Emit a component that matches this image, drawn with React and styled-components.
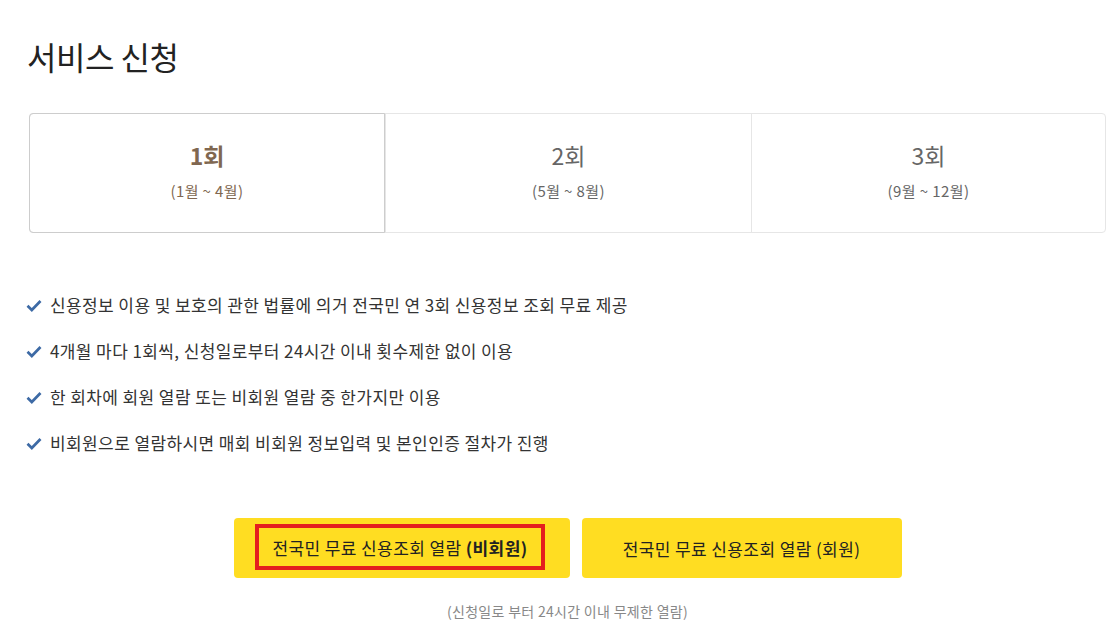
import React from "react";
import styled, { createGlobalStyle } from "styled-components";

const Global = createGlobalStyle`
  html, body { margin: 0; padding: 0; background: #fff; }
  body { font-family: "Noto Sans CJK KR", "Noto Sans", sans-serif; color: #333; }
`;

const Page = styled.div`
  width: 1077px;
  margin-left: 29px;
  padding-top: 34px;
`;

const Title = styled.h1`
  margin: 0 0 0 -2px;
  font-size: 32px;
  line-height: 44px;
  font-weight: 400;
  color: #222;
  letter-spacing: -0.5px;
`;

const Tabs = styled.div`
  margin-top: 35px;
  display: grid;
  grid-template-columns: 355px 366px 1fr;
  height: 120px;
  box-sizing: border-box;
  border: 1px solid #e6e6e6;
  border-radius: 4px;
`;

const Tab = styled.div`
  display: flex;
  flex-direction: column;
  align-items: center;
  justify-content: flex-start;
  gap: 11px;
  padding-top: 26px;
  margin: ${(p) => (p.$active ? "-1px 0 -1px -1px" : "0")};
  border: ${(p) => (p.$active ? "1px solid #cdcdcd" : "none")};
  border-left: ${(p) => (p.$active ? "1px solid #cdcdcd" : p.$first ? "none" : "1px solid #e6e6e6")};
  border-radius: ${(p) => (p.$active ? "4px 0 0 4px" : "0")};
  color: ${(p) => (p.$active ? "#806750" : "#666")};
`;

const TabTitle = styled.div`
  font-size: 23px;
  line-height: 30px;
  font-weight: ${(p) => (p.$active ? 700 : 400)};
`;

const TabSub = styled.div`
  font-size: 15px;
  line-height: 20px;
  letter-spacing: 0.4px;
`;

const List = styled.ul`
  list-style: none;
  margin: 60px 0 0;
  padding: 0;
  display: flex;
  flex-direction: column;
  gap: 22px;
`;

const Item = styled.li`
  display: flex;
  align-items: center;
  gap: 8px;
  margin-left: -3px;
  font-size: 17px;
  line-height: 24px;
  color: #333;
  letter-spacing: 0.4px;
`;

const Check = () => (
  <svg width="16" height="13" viewBox="0 0 16 13">
    <path d="M1.5 6.8 L5.8 11 L14.5 2" fill="none" stroke="#3d6aa5" strokeWidth="2.7" strokeLinejoin="miter" />
  </svg>
);

const Buttons = styled.div`
  margin-top: 63px;
  display: flex;
  justify-content: center;
  gap: 12px;
`;

const Button = styled.button`
  width: ${(p) => p.$w}px;
  height: 60px;
  border: none;
  border-radius: 4px;
  background: #ffdd22;
  display: flex;
  align-items: center;
  justify-content: center;
  font-family: inherit;
  font-size: 17px;
  color: #222;
  padding: 0;
  cursor: pointer;
  letter-spacing: 0.4px;
`;

const Marked = styled.span`
  box-sizing: border-box;
  width: 290px;
  height: 46px;
  margin-top: -2px;
  margin-left: -3px;
  border: 4px solid #e41e1e;
  display: flex;
  align-items: center;
  justify-content: center;
`;

const Note = styled.p`
  margin: 23px 0 0;
  text-align: center;
  font-size: 14px;
  line-height: 20px;
  color: #888;
  letter-spacing: 0.3px;
`;

const tabs = [
  { t: "1회", s: "(1월 ~ 4월)" },
  { t: "2회", s: "(5월 ~ 8월)" },
  { t: "3회", s: "(9월 ~ 12월)" },
];

const items = [
  "신용정보 이용 및 보호의 관한 법률에 의거 전국민 연 3회 신용정보 조회 무료 제공",
  "4개월 마다 1회씩, 신청일로부터 24시간 이내 횟수제한 없이 이용",
  "한 회차에 회원 열람 또는 비회원 열람 중 한가지만 이용",
  "비회원으로 열람하시면 매회 비회원 정보입력 및 본인인증 절차가 진행",
];

export default function App() {
  return (
    <>
      <Global />
      <Page>
        <Title>서비스 신청</Title>
        <Tabs>
          {tabs.map((tab, i) => (
            <Tab key={tab.t} $active={i === 0} $first={i === 0}>
              <TabTitle $active={i === 0}>{tab.t}</TabTitle>
              <TabSub>{tab.s}</TabSub>
            </Tab>
          ))}
        </Tabs>
        <List>
          {items.map((it) => (
            <Item key={it}>
              <Check />
              {it}
            </Item>
          ))}
        </List>
        <Buttons>
          <Button $w={336}>
            <Marked>
              전국민 무료 신용조회 열람&nbsp;<b>(비회원)</b>
            </Marked>
          </Button>
          <Button $w={320}>전국민 무료 신용조회 열람 (회원)</Button>
        </Buttons>
        <Note>(신청일로 부터 24시간 이내 무제한 열람)</Note>
      </Page>
    </>
  );
}
